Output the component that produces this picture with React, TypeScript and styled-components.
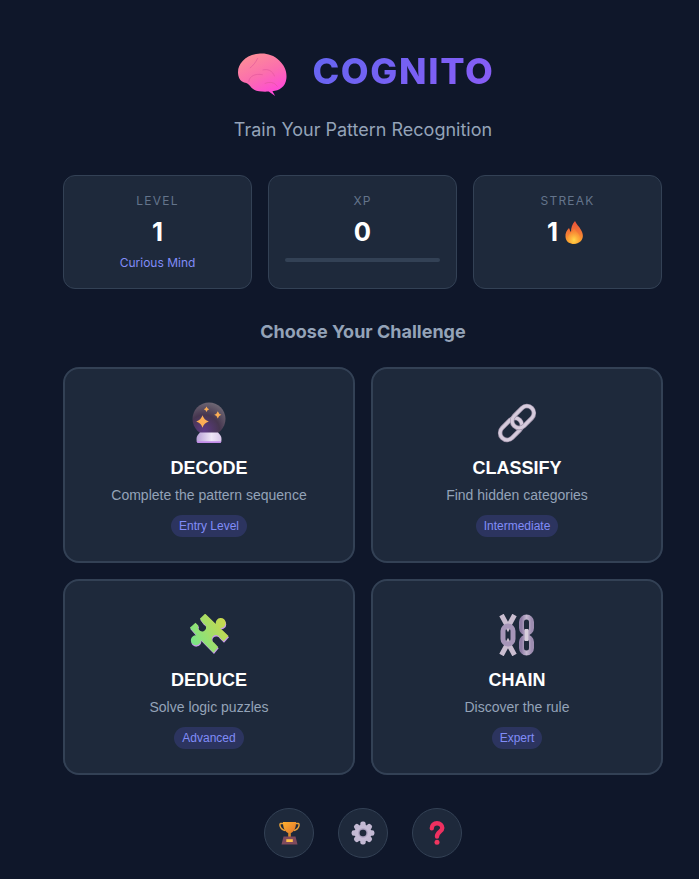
import React from "react";
import styled, { createGlobalStyle } from "styled-components";

const Global = createGlobalStyle`
  html, body { margin: 0; padding: 0; background: #0f172a; }
  body { font-family: Inter, "Liberation Sans", sans-serif; overflow: hidden; }
`;

const Page = styled.div`
  width: 699px;
  height: 879px;
  box-sizing: border-box;
  padding: 43px 36px 0 63px;
  background: #0f172a;
`;

const Header = styled.header`
  display: flex;
  flex-direction: column;
  align-items: center;
  margin-bottom: 31px;
`;

const TitleRow = styled.div`
  display: flex;
  align-items: center;
  justify-content: center;
  gap: 24px;
  height: 56px;
  padding-left: 7px;
`;

const BrainMark = styled.svg`
  margin-top: 8px;
`;

const Title = styled.h1`
  margin: 0;
  font-size: 36px;
  line-height: 56px;
  font-weight: 800;
  letter-spacing: 1.65px;
  background: linear-gradient(135deg, #6366f1, #8b5cf6);
  -webkit-background-clip: text;
  background-clip: text;
  color: transparent;
`;

const Subtitle = styled.p`
  margin: 17px 0 0;
  font-size: 18px;
  line-height: 28px;
  color: #94a3b8;
`;

const StatsRow = styled.section`
  display: grid;
  grid-template-columns: repeat(3, 189px);
  gap: 16px;
  margin-bottom: 31px;
`;

const StatCard = styled.div`
  box-sizing: border-box;
  height: 114px;
  padding: 17px 16px 0;
  background: #1e293b;
  border: 1px solid #334155;
  border-radius: 12px;
  text-align: center;
`;

const StatLabel = styled.div`
  font-size: 12px;
  line-height: 16px;
  letter-spacing: 1.2px;
  color: #64748b;
`;

const StatValue = styled.div`
  display: flex;
  align-items: center;
  justify-content: center;
  margin-top: 7px;
  font-size: 25.6px;
  line-height: 32px;
  font-weight: 700;
  color: #ffffff;
`;

const StatNote = styled.div`
  margin-top: 7px;
  font-size: 12px;
  line-height: 16px;
  color: #818cf8;
`;

const XpTrack = styled.div`
  height: 4px;
  margin-top: 10px;
  background: #334155;
  border-radius: 2px;
`;

const SectionTitle = styled.h2`
  margin: 0 0 23px;
  font-size: 18px;
  line-height: 24px;
  font-weight: 700;
  text-align: center;
  color: #94a3b8;
`;

const ModeGrid = styled.section`
  display: grid;
  grid-template-columns: repeat(2, 292px);
  gap: 16px;
`;

const ModeCard = styled.button`
  display: flex;
  flex-direction: column;
  align-items: center;
  box-sizing: border-box;
  height: 196px;
  padding: 30px 16px 0;
  background: #1e293b;
  border: 2px solid #334155;
  border-radius: 16px;
  font-family: "Liberation Sans", Arial, sans-serif;
`;

const ModeIcon = styled.div`
  display: flex;
  align-items: center;
  justify-content: center;
  height: 48px;
  margin-bottom: 9px;
`;

const ModeName = styled.div`
  font-size: 18px;
  line-height: 24px;
  font-weight: 700;
  color: #ffffff;
`;

const ModeDesc = styled.div`
  margin-top: 5px;
  font-size: 14px;
  line-height: 20px;
  color: #94a3b8;
`;

const Badge = styled.span`
  margin-top: 10px;
  padding: 0 8px;
  font-size: 12px;
  line-height: 22px;
  color: #818cf8;
  background: rgba(99, 102, 241, 0.2);
  border-radius: 11px;
`;

const Footer = styled.footer`
  display: flex;
  justify-content: center;
  gap: 24px;
  margin-top: 33px;
`;

const RoundButton = styled.button`
  display: flex;
  align-items: center;
  justify-content: center;
  width: 50px;
  height: 50px;
  padding: 0;
  background: #1e293b;
  border: 1px solid #334155;
  border-radius: 50%;
`;

const FlameMark = styled.svg`
  margin: 0 4px 0 6px;
`;

const Brain = () => (
  <BrainMark width="50" height="44" viewBox="118 66 148 130">
    <defs>
      <linearGradient id="brainG" x1="0.2" y1="0" x2="0.7" y2="1">
        <stop offset="0" stopColor="#fd9096" />
        <stop offset="0.5" stopColor="#fb6fad" />
        <stop offset="1" stopColor="#ff45dc" />
      </linearGradient>
    </defs>
    <path d="M118 122C118 98 140 72 178 68C198 65 222 70 240 88C256 103 264 122 261 143C258 166 240 178 220 179L228 193L209 180C190 181 168 180 158 169C150 158 146 154 136 153C124 149 118 138 118 122Z" fill="url(#brainG)" />
    <path d="M150 150C152 134 168 126 190 130M192 116C206 112 220 118 226 134M198 156C212 150 226 152 234 164M176 82C170 94 164 102 154 110" stroke="#e0559a" strokeWidth="1.800" fill="none" strokeLinecap="round" />
  </BrainMark>
);

const Flame = () => (
  <FlameMark width="20" height="24" viewBox="0 0 20 24">
    <defs>
      <linearGradient id="flameG" x1="0.5" y1="0" x2="0.5" y2="1">
        <stop offset="0" stopColor="#e8503a" />
        <stop offset="0.55" stopColor="#f47b35" />
        <stop offset="1" stopColor="#ffb02e" />
      </linearGradient>
      <radialGradient id="flameI" cx="0.5" cy="0.75" r="0.6">
        <stop offset="0" stopColor="#ffd84d" />
        <stop offset="1" stopColor="#ffa033" stopOpacity="0.4" />
      </radialGradient>
    </defs>
    <path d="M11 1C12 4 15 6 17 10C19.500 14 19.500 18 17 21C15 23 12 24 10 24C6 24 2 22 1.500 17C1 13 3 10 5 8C6 10 6 11 7 12C7 8 8 4 11 1Z" fill="url(#flameG)" />
    <path d="M10 9C12 11 16 14 16 18C16 21.500 13 23.500 10 23.500C6.500 23.500 4 21 4 18C4 14 8 12 10 9Z" fill="url(#flameI)" />
  </FlameMark>
);

const Sparkle = ({ x, y, r }: { x: number; y: number; r: number }) => {
  const k = r * 0.24;
  return (
    <path
      d={`M${x} ${y - r}Q${x + k} ${y - k} ${x + r} ${y}Q${x + k} ${y + k} ${x} ${y + r}Q${x - k} ${y + k} ${x - r} ${y}Q${x - k} ${y - k} ${x} ${y - r}Z`}
      fill="#fbae55"
    />
  );
};

const CrystalBall = () => (
  <svg width="36" height="42" viewBox="0 0 36 42">
    <defs>
      <radialGradient id="ballG" cx="0.35" cy="0.85" r="0.95">
        <stop offset="0" stopColor="#5d3a85" />
        <stop offset="0.5" stopColor="#463650" />
        <stop offset="1" stopColor="#75707a" />
      </radialGradient>
      <linearGradient id="baseG" x1="0" y1="0" x2="1" y2="0">
        <stop offset="0" stopColor="#b79fd6" />
        <stop offset="0.6" stopColor="#efe6f7" />
        <stop offset="1" stopColor="#d9c6ea" />
      </linearGradient>
    </defs>
    <circle cx="18" cy="17" r="16.500" fill="url(#ballG)" />
    <path d="M7.500 41C6 41 5.500 39.500 5.500 37C5.500 34 7 32.500 9 30.500H27C29 32.500 30.500 34 30.500 37C30.500 39.500 30 41 28.500 41Z" fill="url(#baseG)" />
    <path d="M7.500 41C6.300 41 5.800 40.200 5.600 39.300H30.400C30.200 40.200 29.700 41 28.500 41Z" fill="#c28be8" />
    <Sparkle x={11.500} y={19.500} r={6.300} />
    <Sparkle x={26.800} y={12.800} r={3.600} />
    <Sparkle x={15.500} y={7.200} r={2.700} />
  </svg>
);

const Links = () => (
  <svg width="40" height="40" viewBox="0 0 40 40">
    <g fill="none">
      <rect x="-7" y="-12.500" width="14" height="25" rx="7" transform="translate(14 26) rotate(45)" stroke="#a497ae" strokeWidth="4.500" />
      <rect x="-7" y="-12.500" width="14" height="25" rx="7" transform="translate(14 26) rotate(45)" stroke="#d6cbdc" strokeWidth="3" />
      <rect x="-7" y="-12.500" width="14" height="25" rx="7" transform="translate(26 14) rotate(45)" stroke="#a497ae" strokeWidth="4.500" />
      <rect x="-7" y="-12.500" width="14" height="25" rx="7" transform="translate(26 14) rotate(45)" stroke="#d6cbdc" strokeWidth="3" />
    </g>
  </svg>
);

const puzzlePath =
  "M133 43L165 74A15 15 0 1 1 178 86L203 110L188 126L176 114A12 12 0 1 0 160 130L172 143L158 160L120 121A15 15 0 1 1 107 108L87 85L104 70L113 79A12 12 0 1 0 128 73L117 58Z";

const Puzzle = () => (
  <svg width="43" height="42" viewBox="82 44 128 126">
    <defs>
      <linearGradient id="puzG" x1="0" y1="0.8" x2="1" y2="0.2">
        <stop offset="0" stopColor="#72e68c" />
        <stop offset="1" stopColor="#d0d648" />
      </linearGradient>
    </defs>
    <path d={puzzlePath} fill="#c79ae8" transform="translate(1.500 4)" />
    <path d={puzzlePath} fill="url(#puzG)" />
  </svg>
);

const Chain = () => (
  <svg width="36" height="42" viewBox="0 0 36 42">
    <defs>
      <linearGradient id="chG" x1="0" y1="0" x2="1" y2="0">
        <stop offset="0" stopColor="#8f7da6" />
        <stop offset="0.5" stopColor="#c4b7cf" />
        <stop offset="1" stopColor="#9d8db0" />
      </linearGradient>
    </defs>
    <path d="M2.500 1L9 13L15.500 1M2.500 41L9 29L15.500 41" fill="none" strokeWidth="5" stroke="#cabdd0" />
    <rect x="4" y="12" width="10" height="18" rx="5" fill="none" stroke="#a695b8" strokeWidth="5" />
    <rect x="22.500" y="3" width="10" height="16" rx="5" fill="none" stroke="url(#chG)" strokeWidth="5" />
    <rect x="22.500" y="23" width="10" height="16" rx="5" fill="none" stroke="url(#chG)" strokeWidth="5" />
    <path d="M27.500 15V27" stroke="#d8cfdd" strokeWidth="3.500" />
  </svg>
);

const Trophy = () => (
  <svg width="21" height="24" viewBox="0 0 21 24">
    <defs>
      <linearGradient id="trG" x1="0" y1="0" x2="1" y2="1">
        <stop offset="0" stopColor="#ffb02e" />
        <stop offset="1" stopColor="#e0762d" />
      </linearGradient>
    </defs>
    <path d="M4.500 2.500H1.800C0.800 2.500 0.800 4 1.100 5C1.800 7.500 3.800 9 6 9.500M16.500 2.500H19.200C20.200 2.500 20.200 4 19.900 5C19.200 7.500 17.200 9 15 9.500" fill="none" stroke="#e9a23b" strokeWidth="1.400" />
    <path d="M4 1H17C17.200 6 15.500 10.500 12 12H9C5.500 10.500 3.800 6 4 1Z" fill="url(#trG)" />
    <rect x="9.200" y="11.500" width="2.600" height="4.500" fill="#d98a2b" />
    <path d="M4.500 15.500H16.500L18.500 23.500H2.500Z" fill="#7f4a5c" />
    <rect x="7.300" y="18.200" width="6.500" height="2.800" fill="#ffc04a" />
  </svg>
);

const Gear = () => (
  <svg width="24" height="24" viewBox="0 0 24 24">
    <defs>
      <radialGradient id="geG" cx="0.5" cy="0.5" r="0.5">
        <stop offset="0.3" stopColor="#867c9e" />
        <stop offset="0.62" stopColor="#c6bcd6" />
        <stop offset="1" stopColor="#c3b9d3" />
      </radialGradient>
    </defs>
    {[0, 45, 90, 135, 180, 225, 270, 315].map((a) => (
      <rect key={a} x="9.300" y="0.600" width="5.400" height="6" rx="2.200" fill="#c3b9d3" transform={`rotate(${a} 12 12)`} />
    ))}
    <circle cx="12" cy="12" r="8.600" fill="url(#geG)" />
    <circle cx="12" cy="12" r="3.300" fill="#1e293b" />
  </svg>
);

const Question = () => (
  <svg width="16" height="24" viewBox="0 0 16 24">
    <path d="M2.800 7.200C2.800 4.200 5 2.300 8 2.300C11 2.300 13.300 4.200 13.300 7C13.300 10.500 8 11 8 15.500" fill="none" stroke="#ee3060" strokeWidth="4.400" strokeLinecap="round" />
    <circle cx="8" cy="21.300" r="2.500" fill="#f0365f" />
  </svg>
);

const modes = [
  { name: "DECODE", desc: "Complete the pattern sequence", level: "Entry Level", icon: <CrystalBall /> },
  { name: "CLASSIFY", desc: "Find hidden categories", level: "Intermediate", icon: <Links /> },
  { name: "DEDUCE", desc: "Solve logic puzzles", level: "Advanced", icon: <Puzzle /> },
  { name: "CHAIN", desc: "Discover the rule", level: "Expert", icon: <Chain /> },
];

export default function App() {
  return (
    <Page>
      <Global />
      <Header>
        <TitleRow>
          <Brain />
          <Title>COGNITO</Title>
        </TitleRow>
        <Subtitle>Train Your Pattern Recognition</Subtitle>
      </Header>
      <StatsRow>
        <StatCard>
          <StatLabel>LEVEL</StatLabel>
          <StatValue>1</StatValue>
          <StatNote>Curious Mind</StatNote>
        </StatCard>
        <StatCard>
          <StatLabel>XP</StatLabel>
          <StatValue>0</StatValue>
          <XpTrack />
        </StatCard>
        <StatCard>
          <StatLabel>STREAK</StatLabel>
          <StatValue>1<Flame /></StatValue>
        </StatCard>
      </StatsRow>
      <SectionTitle>Choose Your Challenge</SectionTitle>
      <ModeGrid>
        {modes.map((m) => (
          <ModeCard key={m.name}>
            <ModeIcon>{m.icon}</ModeIcon>
            <ModeName>{m.name}</ModeName>
            <ModeDesc>{m.desc}</ModeDesc>
            <Badge>{m.level}</Badge>
          </ModeCard>
        ))}
      </ModeGrid>
      <Footer>
        <RoundButton aria-label="Trophies"><Trophy /></RoundButton>
        <RoundButton aria-label="Settings"><Gear /></RoundButton>
        <RoundButton aria-label="Help"><Question /></RoundButton>
      </Footer>
    </Page>
  );
}
